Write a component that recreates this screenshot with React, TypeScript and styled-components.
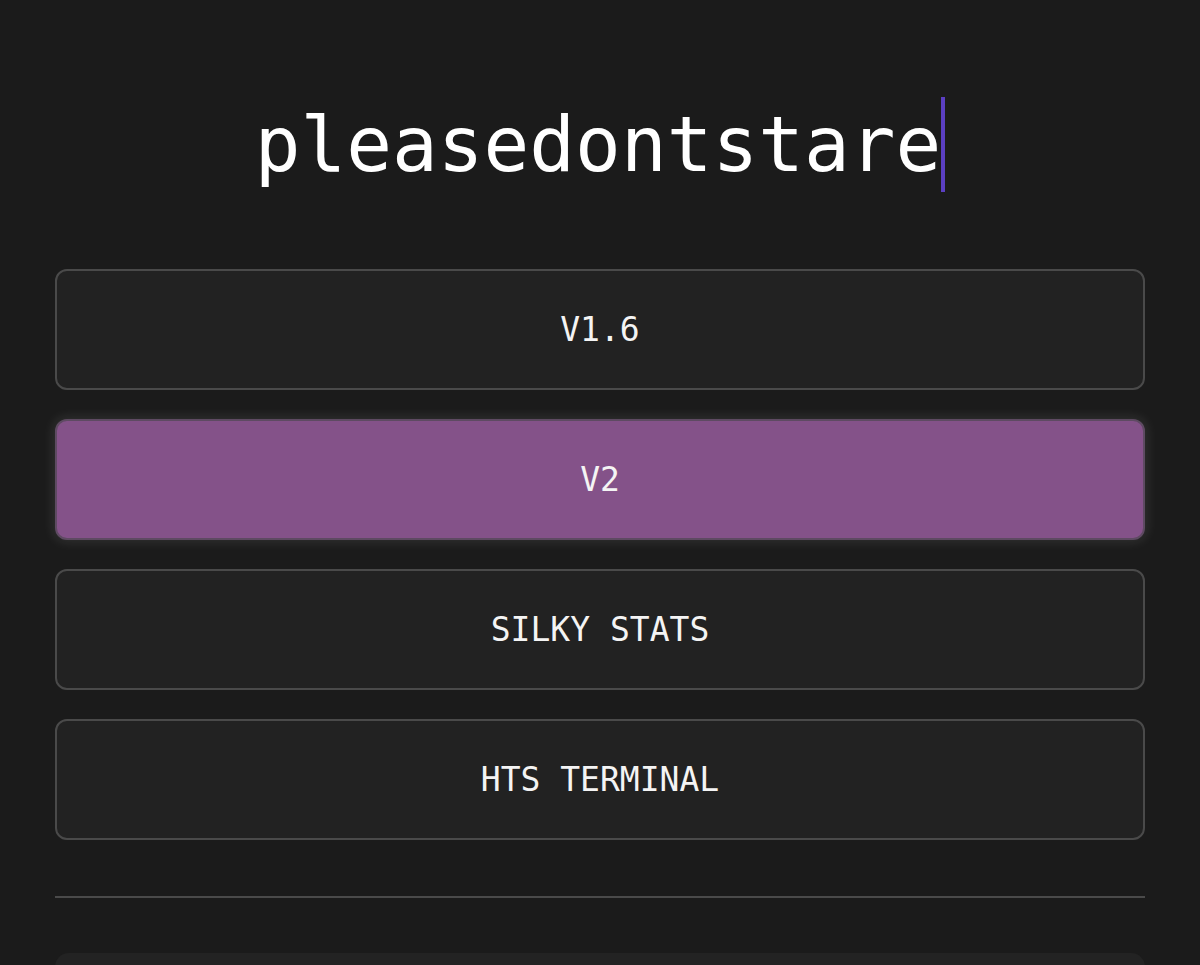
import React from 'react';
import styled, { createGlobalStyle } from 'styled-components';

const GlobalStyle = createGlobalStyle`
  html, body {
    margin: 0;
    padding: 0;
    background: #1b1b1b;
  }
  body {
    font-family: 'DejaVu Sans Mono', 'Liberation Mono', monospace;
    color: #f4f4f4;
    overflow: hidden;
  }
`;

const Page = styled.div`
  height: 965px;
  overflow: hidden;
  padding: 97px 55px 0;
  box-sizing: border-box;
`;

const TitleRow = styled.div`
  display: flex;
  justify-content: center;
  align-items: center;
  height: 95px;
`;

const Title = styled.h1`
  margin: 0;
  font-size: 76px;
  font-weight: 400;
  line-height: 95px;
  color: #ffffff;
`;

const Caret = styled.span`
  display: block;
  width: 4px;
  height: 95px;
  background: #5b3fc2;
`;

const Menu = styled.nav`
  display: flex;
  flex-direction: column;
  gap: 29px;
  margin-top: 77px;
`;

const MenuButton = styled.button<{ $active?: boolean }>`
  height: 121px;
  border-radius: 12px;
  border: 2px solid ${(p) => (p.$active ? '#5e4a62' : '#4a4a4a')};
  background: ${(p) => (p.$active ? '#845289' : '#222222')};
  box-shadow: ${(p) => (p.$active ? '0 0 12px 2px rgba(255, 255, 255, 0.1)' : 'none')};
  color: #f4f4f4;
  font-family: 'DejaVu Sans Mono', 'Liberation Mono', monospace;
  font-size: 33px;
  cursor: pointer;
`;

const Divider = styled.hr`
  margin: 56px 0 0;
  border: none;
  height: 2px;
  background: #4a4a4a;
`;

const Card = styled.div`
  margin-top: 55px;
  height: 120px;
  border-radius: 14px;
  background: #232323;
`;

const items = ['V1.6', 'V2', 'SILKY STATS', 'HTS TERMINAL'];

const App = () => {
  return (
    <Page>
      <GlobalStyle />
      <TitleRow>
        <Title>pleasedontstare</Title>
        <Caret />
      </TitleRow>
      <Menu>
        {items.map((label) => (
          <MenuButton key={label} $active={label === 'V2'}>
            {label}
          </MenuButton>
        ))}
      </Menu>
      <Divider />
      <Card />
    </Page>
  );
};

export default App;
